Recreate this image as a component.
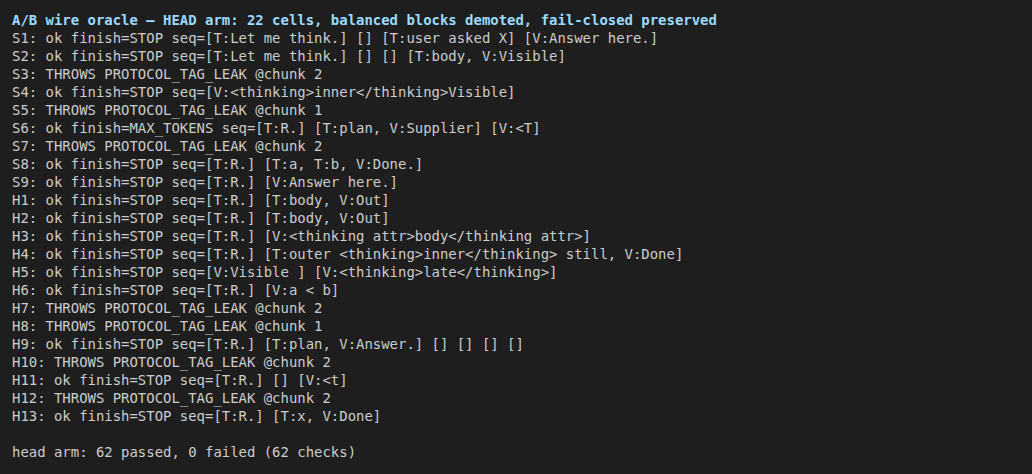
const lines = [
  "S1: ok finish=STOP seq=[T:Let me think.] [] [T:user asked X] [V:Answer here.]",
  "S2: ok finish=STOP seq=[T:Let me think.] [] [] [T:body, V:Visible]",
  "S3: THROWS PROTOCOL_TAG_LEAK @chunk 2",
  "S4: ok finish=STOP seq=[V:<thinking>inner</thinking>Visible]",
  "S5: THROWS PROTOCOL_TAG_LEAK @chunk 1",
  "S6: ok finish=MAX_TOKENS seq=[T:R.] [T:plan, V:Supplier] [V:<T]",
  "S7: THROWS PROTOCOL_TAG_LEAK @chunk 2",
  "S8: ok finish=STOP seq=[T:R.] [T:a, T:b, V:Done.]",
  "S9: ok finish=STOP seq=[T:R.] [V:Answer here.]",
  "H1: ok finish=STOP seq=[T:R.] [T:body, V:Out]",
  "H2: ok finish=STOP seq=[T:R.] [T:body, V:Out]",
  "H3: ok finish=STOP seq=[T:R.] [V:<thinking attr>body</thinking attr>]",
  "H4: ok finish=STOP seq=[T:R.] [T:outer <thinking>inner</thinking> still, V:Done]",
  "H5: ok finish=STOP seq=[V:Visible ] [V:<thinking>late</thinking>]",
  "H6: ok finish=STOP seq=[T:R.] [V:a < b]",
  "H7: THROWS PROTOCOL_TAG_LEAK @chunk 2",
  "H8: THROWS PROTOCOL_TAG_LEAK @chunk 1",
  "H9: ok finish=STOP seq=[T:R.] [T:plan, V:Answer.] [] [] [] []",
  "H10: THROWS PROTOCOL_TAG_LEAK @chunk 2",
  "H11: ok finish=STOP seq=[T:R.] [] [V:<t]",
  "H12: THROWS PROTOCOL_TAG_LEAK @chunk 2",
  "H13: ok finish=STOP seq=[T:R.] [T:x, V:Done]",
];

export default function App() {
  return (
    <div
      className="w-[1032px] h-[474px] bg-[#1e1e1e] text-[#cccccc] text-[13.95px] leading-[18px] pl-[12px] pt-[11px] whitespace-pre overflow-hidden"
      style={{ fontFamily: '"DejaVu Sans Mono", monospace' }}
    >
      <div className="font-bold text-[#9cdcfe]">
        A/B wire oracle — HEAD arm: 22 cells, balanced blocks demoted, fail-closed preserved
      </div>
      {lines.map((l, i) => (
        <div key={i}>{l}</div>
      ))}
      <div>{" "}</div>
      <div>head arm: 62 passed, 0 failed (62 checks)</div>
    </div>
  );
}
